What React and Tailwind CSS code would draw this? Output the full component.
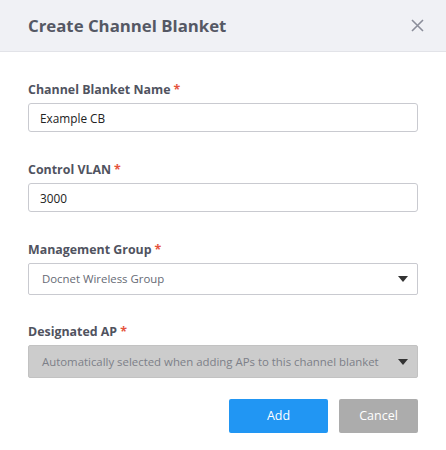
import React from 'react';

const font = { fontFamily: '"Open Sans", "Noto Sans", sans-serif' };

function Label({ children }) {
    return (
        <label className="block text-[12.4px] font-bold text-[#50535f] leading-[18px] mb-[4px]">
            {children}
            <span className="text-[#e5533d] ml-[3px]">*</span>
        </label>
    );
}

function Caret() {
    return (
        <svg width="10" height="6" viewBox="0 0 10 6" className="absolute right-[9px] top-1/2 -translate-y-1/2">
            <path d="M0 0 L10 0 L5 6 Z" fill="#333" />
        </svg>
    );
}

export default function App() {
    return (
        <div className="w-[446px] h-[450px] bg-white" style={font}>
            {/* header */}
            <div className="h-[52px] bg-[#f0f1f5] border-b border-[#e2e3e8] flex items-center justify-between pl-[28px] pr-[22px]">
                <h1 className="text-[16.8px] font-bold text-[#555864]">Create Channel Blanket</h1>
                <button className="w-[14px] h-[14px] flex items-center justify-center">
                    <svg width="13" height="13" viewBox="0 0 13 13">
                        <path d="M1 1 L12 12 M12 1 L1 12" stroke="#8b8e9a" strokeWidth="1.6" />
                    </svg>
                </button>
            </div>

            <div className="px-[28px] pt-[29px]">
                <div>
                    <Label>Channel Blanket Name</Label>
                    <input
                        defaultValue="Example CB"
                        className="w-full h-[29px] border border-[#c9cad0] rounded-[3px] px-[11px] text-[11.8px] text-[#222] outline-none"
                    />
                </div>

                <div className="mt-[29px]">
                    <Label>Control VLAN</Label>
                    <input
                        defaultValue="3000"
                        className="w-full h-[29px] border border-[#c9cad0] rounded-[3px] px-[11px] text-[11.8px] text-[#222] outline-none"
                    />
                </div>

                <div className="mt-[29px]">
                    <Label>Management Group</Label>
                    <div className="relative h-[32px] border border-[#c9cad0] rounded-[2px] flex items-center px-[13px] text-[11.4px] text-[#666a75]">
                        Docnet Wireless Group
                        <Caret />
                    </div>
                </div>

                <div className="mt-[28px]">
                    <Label>Designated AP</Label>
                    <div className="relative h-[33px] bg-[#cccccc] border border-[#c2c2c2] rounded-[2px] flex items-center px-[13px] text-[11.4px] text-[#7c7f88]">
                        Automatically selected when adding APs to this channel blanket
                        <Caret />
                    </div>
                </div>

                <div className="flex justify-end gap-[11px] mt-[21px]">
                    <button className="w-[99px] h-[34px] bg-[#2196f3] text-white text-[12.5px] rounded-[2px]">Add</button>
                    <button className="w-[79px] h-[34px] bg-[#acacac] text-white text-[12.5px] rounded-[2px]">Cancel</button>
                </div>
            </div>
        </div>
    );
}
